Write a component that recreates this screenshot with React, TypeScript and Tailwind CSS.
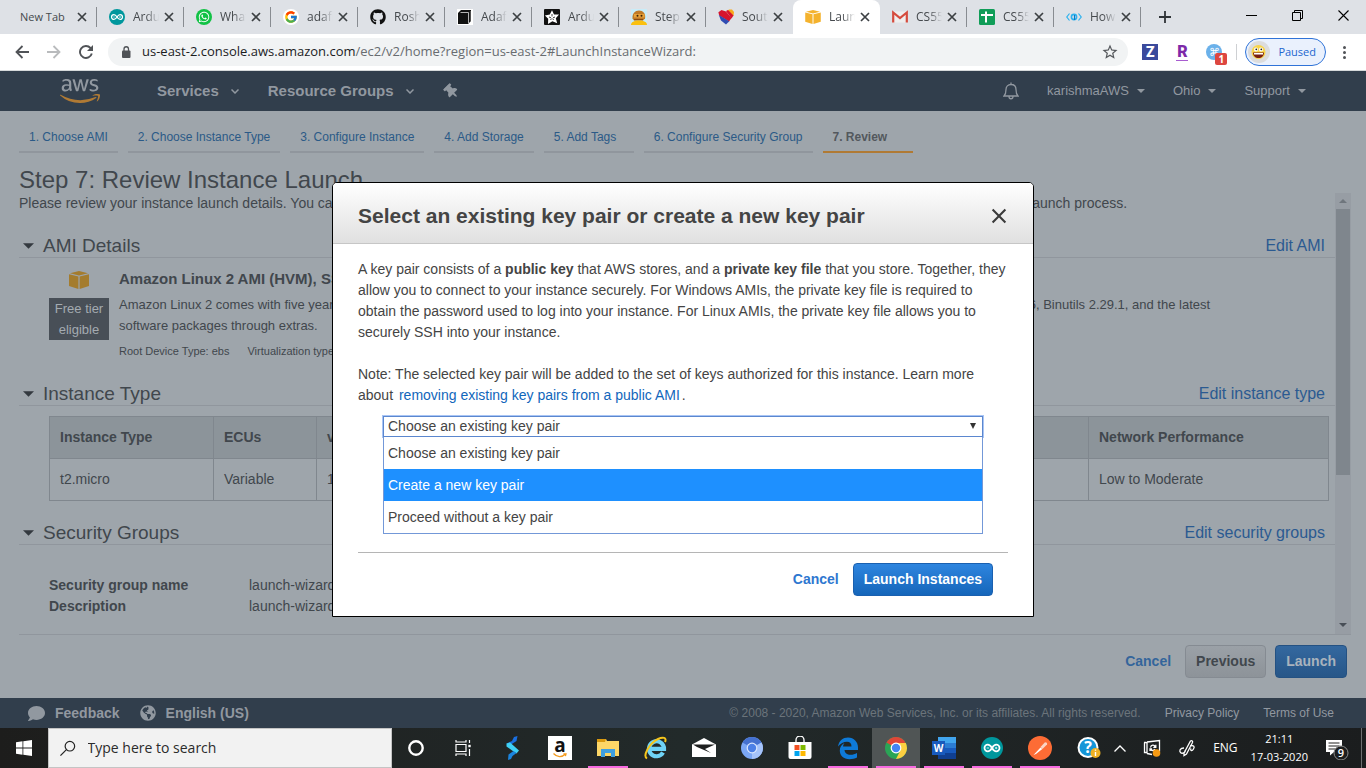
import React from "react";
import { FaAws, FaGithub, FaWhatsapp, FaGlobeAmericas, FaComment, FaThumbtack } from "react-icons/fa";
import { FcGoogle } from "react-icons/fc";

type IconProps = { className?: string };

/* ---------- shared drawings ---------- */

function Cross({ className, weight = 1.7 }: IconProps & { weight?: number }) {
  return (
    <svg viewBox="0 0 10 10" className={className} fill="none" stroke="currentColor" aria-hidden="true">
      <path d="M1 1 9 9M9 1 1 9" strokeWidth={weight} />
    </svg>
  );
}

function Arduino({ className }: IconProps) {
  return (
    <svg viewBox="0 0 24 24" className={className} aria-hidden="true">
      <circle cx="12" cy="12" r="12" fill="#00979d" />
      <g fill="none" stroke="#fff" strokeWidth="1.9">
        <path d="M12 12c-1.400-2.300-2.800-3.600-4.600-3.600a3.600 3.600 0 0 0 0 7.200c1.800 0 3.200-1.300 4.600-3.600zM12 12c1.400-2.300 2.800-3.600 4.600-3.600a3.600 3.600 0 0 1 0 7.200c-1.800 0-3.200-1.300-4.600-3.600z" />
        <path d="M6.200 12h2.600M15.200 12h2.600M16.500 10.700v2.600" strokeWidth="0.9" />
      </g>
    </svg>
  );
}

function Cube({ className }: IconProps) {
  return (
    <svg viewBox="0 0 20 18" className={className} fill="currentColor" aria-hidden="true">
      <path d="M10 0 19 2.2 10 4.4 1 2.2z" />
      <path d="M0 3.2 9.4 5.5V18L0 15z" />
      <path d="M20 3.2 10.6 5.5V18L20 15z" />
    </svg>
  );
}

function BookIcon() {
  return (
    <svg viewBox="0 0 16 16" className="size-4 bg-white" aria-hidden="true">
      <path d="M1 4 4 1h10v11l-3 3H1z" fill="#111" />
      <path d="M3.500 3.500h8V14" fill="none" stroke="#ddd" strokeWidth="0.8" />
      <path d="M13.400 2v10" stroke="#777" strokeWidth="0.7" />
    </svg>
  );
}

function AdafruitIcon() {
  return (
    <svg viewBox="0 0 16 16" className="size-4" aria-hidden="true">
      <rect width="16" height="16" rx="1" fill="#111" />
      <path d="M8 1.2 10 5.4 15 5.6 11.8 9.2 13.2 14.2 8.4 12.2 4 15 4.2 9.8 .9 6.4 5.8 5.6z" fill="#fff" />
      <path d="M8 5v2.4M5 8l2 .8M11 8l-2 .8M6.600 11l.8-1.400M9.600 11l-.9-1.400" stroke="#111" strokeWidth="0.8" />
    </svg>
  );
}

function RobotIcon() {
  return (
    <svg viewBox="0 0 16 16" className="size-4" aria-hidden="true">
      <rect width="16" height="16" fill="#c9ecf8" />
      <path d="M1.500 9.500C1 4.500 4 1.500 8 1.500S15 4.500 14 9.500l-2 2H3z" fill="#c07a26" />
      <path d="M3 5h10.500v3.500H3z" fill="#e8a33a" />
      <circle cx="6.500" cy="6.800" r="1" fill="#3b2208" />
      <circle cx="10.500" cy="6.800" r="1" fill="#3b2208" />
      <path d="M3 10h9v1.200H3z" fill="#8a4c12" />
      <path d="M0 16c0-3 3-4.500 8-4.500s8 1.500 8 4.500z" fill="#fbc010" />
    </svg>
  );
}

function HeartIcon() {
  return (
    <svg viewBox="0 0 16 16" className="size-4" aria-hidden="true">
      <path d="M8.500 2.500 11 .5h3l2 2.500-.5 4z" fill="#f9a91b" />
      <path d="M.400 3.200 3.500 1 8 2.500 13.500 9 11 12.500 1.200 6.500z" fill="#d5152e" />
      <path d="M8 2 10 1 15.500 6.500 13.500 9.500z" fill="#d5152e" />
      <path d="M.8 6 11.300 12.300 8 15.500 3 11.500z" fill="#304cb2" />
    </svg>
  );
}

function GmailIcon() {
  return (
    <svg viewBox="0 0 16 16" className="size-4" aria-hidden="true">
      <path d="M1 2.500h14v11H1z" fill="#eee" />
      <path d="M1.200 13.500V3.500L8 9l6.800-5.500v10" fill="none" stroke="#d54b3d" strokeWidth="2.200" />
    </svg>
  );
}

function SheetsIcon() {
  return (
    <svg viewBox="0 0 16 16" className="size-4" aria-hidden="true">
      <rect width="16" height="16" rx="1.500" fill="#109d58" />
      <path d="M7 2.500V13.500M2 6h12" stroke="#fff" strokeWidth="2" />
    </svg>
  );
}

function CodeIcon() {
  return (
    <svg viewBox="0 0 16 16" className="size-4" fill="none" stroke="#2cb1ee" aria-hidden="true">
      <path d="M3.500 4.500.8 8l2.700 3.500M12.500 4.500 15.200 8l-2.700 3.500" strokeWidth="1.200" />
      <circle cx="8" cy="8" r="2.600" strokeWidth="1.600" />
      <path d="M8.500 6v5" stroke="#0b79c4" strokeWidth="1.200" />
    </svg>
  );
}

/* ---------- browser ---------- */

type Tab = { title: string; icon?: React.ReactNode; active?: boolean };

const tabs: Tab[] = [
  { title: "New Tab" },
  { title: "Arduino", icon: <Arduino className="size-4" /> },
  {
    title: "WhatsApp",
    icon: (
      <span className="flex size-4 items-center justify-center rounded-full bg-[#12c246] text-white">
        <FaWhatsapp className="size-3" />
      </span>
    ),
  },
  {
    title: "adafruit",
    icon: (
      <span className="flex size-4 items-center justify-center rounded-full bg-white">
        <FcGoogle className="size-[14px]" />
      </span>
    ),
  },
  { title: "Roshan", icon: <FaGithub className="size-4 text-[#111]" /> },
  { title: "Adafruit", icon: <BookIcon /> },
  { title: "Arduino", icon: <AdafruitIcon /> },
  { title: "Step by", icon: <RobotIcon /> },
  { title: "Southwest", icon: <HeartIcon /> },
  { title: "Launch", icon: <Cube className="h-[14px] w-4 text-[#f4b22d]" />, active: true },
  { title: "CS5542", icon: <GmailIcon /> },
  { title: "CS5542", icon: <SheetsIcon /> },
  { title: "How to", icon: <CodeIcon /> },
];

function TabStrip() {
  return (
    <div className="flex h-[34px] items-stretch bg-[#dee1e6] pl-[10px] font-['Open_Sans',sans-serif] text-xs text-[#45494d]">
      {tabs.map((tab, i) => {
        const plain = tab.active || tabs[i + 1]?.active;
        return (
          <div
            key={i}
            className={"flex w-[87px] shrink-0 items-center justify-between " + (tab.active ? "rounded-t-lg bg-white" : "")}
          >
            <a href="#tab" className={"flex items-center gap-2 " + (tab.icon ? "pl-3" : "pl-[10px] text-[11px]")}>
              {tab.icon}
              <span
                className={
                  "overflow-hidden whitespace-nowrap " +
                  (tab.icon ? "w-[26px] [mask-image:linear-gradient(90deg,#000_50%,transparent)]" : "")
                }
              >
                {tab.title}
              </span>
            </a>
            <span className="flex items-center gap-[9px]">
              <button aria-label="Close tab">
                <Cross className="size-[10px] text-[#3c4043]" />
              </button>
              <span className={"h-5 w-px " + (plain ? "" : "bg-[#888c91]")} />
            </span>
          </div>
        );
      })}
      <button aria-label="New tab" className="flex w-[48px] items-center justify-center">
        <svg viewBox="0 0 12 12" className="size-3" stroke="#2f3337" strokeWidth="1.800">
          <path d="M6 0v12M0 6h12" />
        </svg>
      </button>
      <div className="ml-auto flex pb-1">
        <button aria-label="Minimize" className="flex w-[46px] items-center justify-center">
          <svg viewBox="0 0 11 11" className="size-[11px]" stroke="#000">
            <path d="M0 5.500h11" />
          </svg>
        </button>
        <button aria-label="Restore" className="flex w-[46px] items-center justify-center">
          <svg viewBox="0 0 11 11" className="size-[11px]" fill="none" stroke="#000">
            <path d="M.5 2.500h8v8h-8zM2.500 2.500v-2h8v8h-2" />
          </svg>
        </button>
        <button aria-label="Close window" className="flex w-[46px] items-center justify-center">
          <svg viewBox="0 0 11 11" className="size-[11px]" stroke="#000" strokeWidth="1.100">
            <path d="M.5.5l10 10M10.500.5l-10 10" />
          </svg>
        </button>
      </div>
    </div>
  );
}

function Toolbar() {
  return (
    <div className="flex h-[37px] items-center border-b border-[#d5d9da] bg-white pl-[6px] font-['Open_Sans',sans-serif]">
      <button aria-label="Back" className="flex w-8 justify-center">
        <svg viewBox="0 0 14 14" className="size-[14px]" fill="none" stroke="#505357" strokeWidth="1.800">
          <path d="M14 7H1.500M7.500 1 1.500 7l6 6" />
        </svg>
      </button>
      <button aria-label="Forward" className="flex w-8 justify-center">
        <svg viewBox="0 0 14 14" className="size-[14px]" fill="none" stroke="#b9bbbd" strokeWidth="1.800">
          <path d="M0 7h12.500M6.500 1l6 6-6 6" />
        </svg>
      </button>
      <button aria-label="Reload" className="flex w-8 justify-center">
        <svg viewBox="0 0 14 14" className="size-[14px]" fill="none" stroke="#505357" strokeWidth="1.900">
          <path d="M12.800 8.500A6 6 0 1 1 11.500 3l1 1.200" />
          <path d="M14 0v6H8z" fill="#505357" stroke="none" />
        </svg>
      </button>
      <div className="ml-[6px] flex h-7 flex-1 items-center rounded-full bg-[#f1f3f4] pr-[9px] pl-[13px]">
        <svg viewBox="0 0 10 12" className="h-3 w-[10px]" aria-hidden="true">
          <rect x="1" y="4.500" width="8.500" height="7.500" rx="1" fill="#505357" />
          <path d="M3 5V3a2.200 2.200 0 0 1 4.500 0v2" fill="none" stroke="#505357" strokeWidth="1.300" />
        </svg>
        <p className="ml-[11px] flex-1 text-[13px] whitespace-nowrap text-[#686c70]">
          <span className="text-[#1b1c1e]">us-east-2.console.aws.amazon.com</span>
          /ec2/v2/home?region=us-east-2#LaunchInstanceWizard:
        </p>
        <button aria-label="Bookmark">
          <svg viewBox="0 0 24 24" className="size-[18px]" fill="#55585c">
            <path d="M22 9.240l-7.190-.62L12 2 9.190 8.630 2 9.240l5.460 4.730L5.820 21 12 17.270 18.180 21l-1.630-7.030zM12 15.400l-3.760 2.270 1-4.280-3.320-2.880 4.380-.38L12 6.100l1.710 4.040 4.380.38-3.320 2.880 1 4.280z" />
          </svg>
        </button>
      </div>
      <button className="ml-[14px] flex size-4 items-center justify-center bg-[#3b4a9c] font-['Roboto',sans-serif] text-sm font-black text-white">
        Z
      </button>
      <button className="ml-[15px] flex h-5 w-[18px] flex-col items-center pt-[2px] font-['Roboto',sans-serif] text-base/4 font-black text-[#7d2aa8]">
        R
        <span className="h-px w-3 bg-[#a85cd0]" />
      </button>
      <button aria-label="Extension" className="relative ml-[15px] flex size-4 items-center justify-center rounded-full bg-[#6bb1ea] text-[11px] text-white">
        ⌘
        <span className="absolute top-[9px] left-[9px] flex size-3 items-center justify-center rounded-xs bg-[#dd4640] text-[10px] font-bold">
          1
        </span>
      </button>
      <span className="ml-[14px] h-4 w-px bg-[#ced0d3]" />
      <button className="ml-2 flex h-7 items-center gap-[8px] rounded-full border border-[#2f73d8] bg-[#eaf1fd] pr-[9px] pl-[2px] text-[11px] text-[#2366cf]">
        <svg viewBox="0 0 22 22" className="size-[22px]" aria-hidden="true">
          <circle cx="11" cy="11" r="11" fill="#dcdcdc" />
          <circle cx="10.500" cy="11" r="7" fill="#f8d44a" />
          <path d="M5 11.500h11c0 3.500-2.300 5.500-5.500 5.500S5 15 5 11.500z" fill="#7a1f12" />
          <path d="M6 12h9v1.500H6z" fill="#fff" />
          <circle cx="8" cy="8.500" r="2" fill="#fff" />
          <circle cx="13" cy="8.500" r="2" fill="#fff" />
          <circle cx="8.300" cy="8.300" r=".9" fill="#222" />
          <circle cx="13.300" cy="8.300" r=".9" fill="#222" />
        </svg>
        Paused
      </button>
      <button aria-label="Browser menu" className="mr-[13px] ml-[9px] flex w-[18px] flex-col items-center gap-[2px]">
        <span className="size-[3px] rounded-full bg-[#505357]" />
        <span className="size-[3px] rounded-full bg-[#505357]" />
        <span className="size-[3px] rounded-full bg-[#505357]" />
      </button>
    </div>
  );
}

/* ---------- console ---------- */

function Chevron() {
  return (
    <svg viewBox="0 0 8 5" className="h-[5px] w-2" fill="none" stroke="currentColor" strokeWidth="1.500" aria-hidden="true">
      <path d="M.5.5 4 4 7.500.5" />
    </svg>
  );
}

function Caret({ className }: IconProps) {
  return (
    <svg viewBox="0 0 8 4" className={className} fill="currentColor" aria-hidden="true">
      <path d="M0 0h8L4 4z" />
    </svg>
  );
}

function ConsoleNav() {
  return (
    <nav className="flex h-10 shrink-0 items-center bg-[#313e4c] pl-[60px] text-[#9198a0]">
      <a href="#home" aria-label="AWS home">
        <svg width="0" height="0" className="absolute" aria-hidden="true">
          <linearGradient id="aws-fill" x1="0" y1="0" x2="0" y2="1">
            <stop offset="0.6" stopColor="#9198a0" />
            <stop offset="0.6" stopColor="#b07a34" />
          </linearGradient>
        </svg>
        <FaAws className="h-8 w-10" fill="url(#aws-fill)" />
      </a>
      <button className="ml-[57px] flex items-center gap-3 text-[15px] font-bold">
        Services <Chevron />
      </button>
      <button className="ml-[29px] flex items-center gap-3 text-[15px] font-bold">
        Resource Groups <Chevron />
      </button>
      <button aria-label="Pin shortcuts" className="ml-[30px]">
        <FaThumbtack className="size-[15px] -rotate-45" />
      </button>
      <div className="ml-auto flex items-center pr-[60px] text-[13px]">
        <button aria-label="Notifications">
          <svg viewBox="0 0 16 18" className="h-[18px] w-4" fill="none" stroke="currentColor" strokeWidth="1.300">
            <path d="M1 14c2-2 2-3.500 2-6.500C3 4.500 5 2.500 8 2.500s5 2 5 5c0 3 0 4.500 2 6.500zM8 .5v2M6 14.500c0 3 4 3 4 0" />
          </svg>
        </button>
        <button className="ml-7 flex items-center gap-2">
          karishmaAWS <Caret className="h-1 w-2" />
        </button>
        <button className="ml-7 flex items-center gap-2">
          Ohio <Caret className="h-1 w-2" />
        </button>
        <button className="ml-7 flex items-center gap-2">
          Support <Caret className="h-1 w-2" />
        </button>
      </div>
    </nav>
  );
}

const steps = [
  "1. Choose AMI",
  "2. Choose Instance Type",
  "3. Configure Instance",
  "4. Add Storage",
  "5. Add Tags",
  "6. Configure Security Group",
  "7. Review",
];

function StepBar() {
  return (
    <ol className="flex gap-[10px] pt-[15px] text-xs">
      {steps.map((step, i) => {
        const current = i === steps.length - 1;
        return (
          <li
            key={step}
            className={
              "h-[27px] min-w-[90px] border-b-2 px-[10px] pt-px leading-5 " +
              (current ? "border-[#b07a34] font-bold text-[#53585d]" : "border-[#90969d]")
            }
          >
            {current ? step : <a href={"#step-" + (i + 1)} className="text-[#2b5a87]">{step}</a>}
          </li>
        );
      })}
    </ol>
  );
}

function SectionHead({ title, action }: { title: string; action: string }) {
  return (
    <div className="flex items-end justify-between border-b border-[#90969d] pr-[10px] pl-1">
      <h2 className="flex items-center gap-[9px] text-[19px]/[22px]">
        <Caret className="h-[6px] w-[11px] text-[#33393f]" />
        {title}
      </h2>
      <a href="#edit" className="text-base/[22px] text-[#2b5a91]">
        {action}
      </a>
    </div>
  );
}

const columns = [
  { name: "Instance Type", value: "t2.micro", width: "w-[164px]" },
  { name: "ECUs", value: "Variable", width: "w-[103px]" },
  { name: "vCPUs", value: "1", width: "w-[110px]" },
  { name: "Memory (GiB)", value: "1", width: "w-[180px]" },
  { name: "Instance Storage (GB)", value: "EBS only", width: "w-[222px]" },
  { name: "EBS-Optimized Available", value: "-", width: "w-[260px]" },
  { name: "Network Performance", value: "Low to Moderate", width: "" },
];

function Review() {
  return (
    <div className="flex flex-1 border-b border-[#90969d]">
      <div className="flex-1">
        <p className="text-sm/5">
          Please review your instance launch details. You can go back to edit changes for each section. Click{" "}
          <b>Launch</b> to assign a key pair to your instance and complete the launch process.
        </p>
        <section className="mt-[22px]">
          <SectionHead title="AMI Details" action="Edit AMI" />
          <div className="flex gap-[10px] pt-[10px] pl-[30px]">
            <div className="flex w-[60px] shrink-0 flex-col items-center">
              <Cube className="mt-[3px] h-[18px] w-5 text-[#a47c2e]" />
              <span className="mt-[9px] w-full bg-[#484f57] px-1 text-center text-[13px]/[21px] text-[#a4abb1]">
                Free tier eligible
              </span>
            </div>
            <div className="w-[1110px]">
              <h3 className="text-[15px]/[22px] font-bold">Amazon Linux 2 AMI (HVM), SSD Volume Type - ami-0e01ce4ee18447327</h3>
              <p className="mt-1 text-[13px]/[21px]">
                Amazon Linux 2 comes with five years support. It provides Linux kernel 4.14 tuned for optimal performance
                on Amazon EC2, systemd 219, GCC 7.3, Glibc 2.26, Binutils 2.29.1, and the latest software packages
                through extras.
              </p>
              <p className="mt-[7px] flex gap-[18px] text-[11px]/4">
                <span>Root Device Type: ebs</span>
                <span>Virtualization type: hvm</span>
              </p>
            </div>
          </div>
        </section>
        <section className="mt-6">
          <SectionHead title="Instance Type" action="Edit instance type" />
          <div className="pt-[10px] pr-[6px] pl-[30px]">
            <table className="w-full table-fixed border-collapse text-left text-sm [&_td]:border [&_td]:border-[#80878e] [&_td]:px-[10px] [&_td]:pb-[2px] [&_th]:border [&_th]:border-[#80878e] [&_th]:px-[10px] [&_th]:pb-[2px]">
              <thead>
                <tr className="h-[42px] bg-[#8c949a]">
                  {columns.map((c) => (
                    <th key={c.name} className={"whitespace-nowrap " + c.width}>
                      {c.name}
                    </th>
                  ))}
                </tr>
              </thead>
              <tbody>
                <tr className="h-[42px]">
                  {columns.map((c) => (
                    <td key={c.name}>{c.value}</td>
                  ))}
                </tr>
              </tbody>
            </table>
          </div>
        </section>
        <section className="mt-[21px]">
          <SectionHead title="Security Groups" action="Edit security groups" />
          <dl className="grid grid-cols-[200px_1fr] pt-[30px] pl-[30px] text-sm/[21px]">
            <dt className="font-bold">Security group name</dt>
            <dd>launch-wizard-1</dd>
            <dt className="font-bold">Description</dt>
            <dd>launch-wizard-1 created 2020-03-17</dd>
          </dl>
        </section>
      </div>
      <div className="flex w-4 flex-col items-center bg-[#979da4] text-[#484f57]">
        <Caret className="mt-[6px] h-1 w-2 rotate-180 text-[#6f767d]" />
        <div className="mt-[6px] h-[266px] w-[14px] bg-[#7f868d]" />
        <Caret className="mt-auto mb-[7px] h-1 w-2" />
      </div>
    </div>
  );
}

function KeyPairDialog() {
  return (
    <div
      role="dialog"
      aria-modal="true"
      aria-labelledby="dialog-title"
      className="w-[702px] rounded-t-[5px] border border-black bg-white text-sm text-[#444]"
    >
      <header className="flex h-[61px] items-center justify-between rounded-t-[4px] border-b border-[#c6c6c6] bg-linear-to-b from-white to-[#e0e0e0] pt-[6px] pr-[26px] pl-[25px]">
        <h2 id="dialog-title" className="text-[21px] font-bold">
          Select an existing key pair or create a new key pair
        </h2>
        <button aria-label="Close">
          <Cross className="size-4 text-[#3a3a3a]" weight={1.3} />
        </button>
      </header>
      <div className="px-[25px] pt-[15px] pb-5">
        <p className="leading-[21px]">
          A key pair consists of a <b>public key</b> that AWS stores, and a <b>private key file</b> that you store.
          Together, they allow you to connect to your instance securely. For Windows AMIs, the private key file is
          required to obtain the password used to log into your instance. For Linux AMIs, the private key file allows
          you to securely SSH into your instance.
        </p>
        <p className="mt-[21px] leading-[21px]">
          Note: The selected key pair will be added to the set of keys authorized for this instance. Learn more about{" "}
          <a href="#learn" className="mx-[2px] text-[#1166bb]">
            removing existing key pairs from a public AMI
          </a>
          .
        </p>
        <div className="relative mt-[10px] mr-[25px] mb-[115px] ml-[25px]">
          <select
            aria-label="Key pair option"
            defaultValue="existing"
            className="block h-[21px] w-full appearance-none border border-[#5b87cf] bg-white pl-1 text-sm/[19px] text-[#444] shadow-[0_0_0_1px_#a9c5f5]"
          >
            <option value="existing">Choose an existing key pair</option>
            <option value="create">Create a new key pair</option>
            <option value="none">Proceed without a key pair</option>
          </select>
          <svg viewBox="0 0 6 6" className="absolute top-[7px] right-[7px] size-[6px]" aria-hidden="true">
            <path d="M0 0h6L3 6z" fill="#333" />
          </svg>
          <ul role="listbox" aria-label="Key pair choices" className="absolute inset-x-0 top-full border border-t-0 border-[#7398d8] bg-white leading-8">
            <li role="option" aria-selected="false" className="pl-1">Choose an existing key pair</li>
            <li role="option" aria-selected="true" className="bg-[#1e90ff] pl-1 text-white">Create a new key pair</li>
            <li role="option" aria-selected="false" className="pl-1">Proceed without a key pair</li>
          </ul>
        </div>
        <div className="flex items-center justify-end gap-[14px] border-t border-[#b5b5b5] pt-[10px] pr-[15px] font-bold">
          <button className="pb-[2px] text-[#2e77d0]">Cancel</button>
          <button className="h-[33px] rounded-[4px] border border-[#1a60b0] bg-linear-to-b from-[#2e85df] to-[#1566ba] px-[10px] pb-[2px] text-white">
            Launch Instances
          </button>
        </div>
      </div>
    </div>
  );
}

/* ---------- taskbar ---------- */

const S = "size-6";

const apps: { name: string; icon: React.ReactNode; bar?: boolean; focus?: boolean }[] = [
  { name: "Cortana", icon: <svg viewBox="0 0 24 24" className={S}><circle cx="12" cy="12" r="6.700" fill="none" stroke="#fff" strokeWidth="2.400" /></svg> },
  {
    name: "Task view",
    icon: (
      <svg viewBox="0 0 24 24" className={S} fill="none" stroke="#fff" strokeWidth="1.200">
        <path d="M4 8.500h10v7H4zM4 4v2h10V4M4 20v-2h10v2M17.500 4v3M17.500 13v7" />
        <path d="M16.300 8.800h2.400v2.400h-2.400z" fill="#fff" stroke="none" />
      </svg>
    ),
  },
  {
    name: "Snap",
    icon: (
      <svg viewBox="0 0 24 24" className={S}>
        <path d="M17.500 0 16.500 5 9.500 9.500 6.500 7.500 12 5 14 1z" fill="#1a6fe0" />
        <path d="M6.500 7.500 10 6.500l9 8-2.500 3-3-2-7-5z" fill="#3fd0f5" />
        <path d="M8 24 8.500 18.500l5-3.500 3 2-4 3-1.500 3z" fill="#1b84dd" />
      </svg>
    ),
  },
  {
    name: "Amazon",
    icon: (
      <span className="flex size-6 flex-col items-center bg-white font-['Open_Sans',sans-serif] text-[19px]/[19px] font-bold text-[#111]">
        <span className="h-[17px]">a</span>
        <svg viewBox="0 0 14 5" className="h-[5px] w-[14px]" fill="none" stroke="#f39a1d" strokeWidth="1.300"><path d="M.5.500C4 4.500 9 4.500 12.500 1M10.500.8h2.500l-.6 2.400" /></svg>
      </span>
    ),
  },
  {
    name: "File Explorer",
    bar: true,
    icon: (
      <svg viewBox="0 0 24 24" className={S}>
        <path d="M1 3h9l1 2h12v15H1z" fill="#fcd667" />
        <path d="M1 3h9l-1 3H1z" fill="#d9990f" />
        <path d="M5 21v-8h14v8h-4v-4H9v4z" fill="#3f9fe0" />
      </svg>
    ),
  },
  {
    name: "Internet Explorer",
    icon: (
      <svg viewBox="0 0 24 24" className={S} fill="none">
        <path d="M19 16.500A7.500 7.500 0 1 1 20 12.800H7" stroke="#6fd3f7" strokeWidth="4.200" />
        <path d="M3 22.500C-1.500 20 5 7.500 14 3c5-2.500 9-1.500 7 3" stroke="#f5c51c" strokeWidth="2" />
      </svg>
    ),
  },
  {
    name: "Mail",
    icon: (
      <svg viewBox="0 0 24 24" className={S}>
        <path d="M0 8.500 12 2l12 6.500V21H0z" fill="#fff" />
        <path d="M1 8.500h22L13 13l6 4-14-6z" fill="#1d1f1f" />
      </svg>
    ),
  },
  {
    name: "Chromium",
    icon: (
      <svg viewBox="0 0 24 24" className={S}>
        <circle cx="12" cy="12" r="11" fill="#7ba7f5" />
        <path d="M12 12 2.500 6.500A11 11 0 0 1 21.500 6.500z" fill="#4571d0" />
        <path d="M12 12 21.500 6.500A11 11 0 0 1 12 23z" fill="#a6c4fa" />
        <circle cx="12" cy="12" r="5.400" fill="#dbe7fd" />
        <circle cx="12" cy="12" r="4.200" fill="#4c80e6" />
      </svg>
    ),
  },
  {
    name: "Store",
    icon: (
      <svg viewBox="0 0 24 24" className={S}>
        <path d="M.5 6h23v15q0 2-2 2h-19q-2 0-2-2z" fill="#fff" />
        <path d="M8 6V4a4 4 0 0 1 8 0v2" fill="none" stroke="#fff" strokeWidth="1.300" />
        <path d="M6.500 9h5v5h-5z" fill="#f25022" />
        <path d="M12.500 9h5v5h-5z" fill="#7fba00" />
        <path d="M6.500 15h5v5h-5z" fill="#00a4ef" />
        <path d="M12.500 15h5v5h-5z" fill="#ffb900" />
      </svg>
    ),
  },
  {
    name: "Edge",
    bar: true,
    icon: (
      <svg viewBox="0 0 24 24" className={S}>
        <path d="M2 10.500C3 4.500 7 1.500 12 1.500c6 0 10 4.500 10 10V14H8.500c.2 3 2.500 4.800 6 4.800 2.500 0 4.500-.6 6.500-1.800v4.500c-2 1.200-4.600 1.700-7.500 1.700-6 0-9.700-3.500-9.700-8.700 0-3.500 2-6 4.700-7.500-1 1.200-1.300 2.300-1.400 3.500h8.400c0-3-1.500-4.700-4.500-4.700C7.500 5.800 4.500 7.500 2 10.500z" fill="#0e7ad8" />
      </svg>
    ),
  },
  {
    name: "Chrome",
    bar: true,
    focus: true,
    icon: (
      <svg viewBox="0 0 24 24" className={S}>
        <circle cx="12" cy="12" r="11" fill="#2aa456" />
        <path d="M12 12 2.500 6.500A11 11 0 0 1 21.500 6.500z" fill="#df4637" />
        <path d="M12 7h9.800A11 11 0 0 1 12 23l4.300-8.500z" fill="#fdcf41" />
        <circle cx="12" cy="12" r="5.400" fill="#fff" />
        <circle cx="12" cy="12" r="4.200" fill="#4285f4" />
      </svg>
    ),
  },
  {
    name: "Word",
    bar: true,
    icon: (
      <svg viewBox="0 0 24 24" className={S}>
        <path d="M6 1h18v6H6z" fill="#41a5ee" />
        <path d="M6 7h18v5H6z" fill="#2b7cd3" />
        <path d="M6 12h18v5H6z" fill="#185abd" />
        <path d="M6 17h18v6H6z" fill="#103f91" />
        <path d="M0 5h13v14H0z" fill="#185abd" />
        <text x="6.500" y="15.500" textAnchor="middle" fontFamily="Open Sans" fontWeight="700" fontSize="10" fill="#fff">W</text>
      </svg>
    ),
  },
  { name: "Arduino IDE", bar: true, icon: <Arduino className="size-[22px]" /> },
  {
    name: "Postman",
    bar: true,
    icon: (
      <svg viewBox="0 0 24 24" className={S}>
        <circle cx="12" cy="12" r="12" fill="#fd6c35" />
        <path d="M5.500 19 12.500 11.500l1.800 1.500L8 18z" fill="#fff" />
        <path d="M12.500 11 17 6.200q2.500 0 2 2.300L14.500 13z" fill="#fbd3c3" />
      </svg>
    ),
  },
];

function Taskbar() {
  return (
    <div className="flex h-10 shrink-0 items-stretch bg-linear-to-r from-[#1d1d1c] via-[#222a2a] to-[#1b1d1e] font-['Open_Sans',sans-serif] text-white">
      <button aria-label="Start" className="flex w-12 items-center justify-center">
        <svg viewBox="0 0 16 16" className="size-4" fill="#fff">
          <path d="M0 2.200 6.500 1.300V7.600H0zM7.300 1.200 16 0v7.600H7.300zM0 8.400h6.500v6.300L0 13.800zM7.300 8.400H16V16l-8.700-1.200z" />
        </svg>
      </button>
      <label className="flex w-[344px] items-center gap-3 border border-[#c4c4c4] bg-[#f2f2f2] pl-[11px]">
        <svg viewBox="0 0 17 17" className="size-[17px]" fill="none" stroke="#222" strokeWidth="1.300" aria-hidden="true">
          <circle cx="10.800" cy="6" r="5.200" />
          <path d="M7 9.700.5 16.300" />
        </svg>
        <input
          type="text"
          aria-label="Search"
          placeholder="Type here to search"
          className="w-full bg-transparent text-sm outline-none placeholder:text-[#2b2b2b]"
        />
      </label>
      {apps.map((app) => (
        <button
          key={app.name}
          aria-label={app.name}
          className={"relative flex w-[48px] items-center justify-center " + (app.focus ? "bg-[#505555]" : "")}
        >
          {app.icon}
          {app.bar && <span className="absolute inset-x-1 bottom-0 h-[2px] bg-[#f66ae0]" />}
        </button>
      ))}
      <div className="ml-auto flex items-center">
        <button aria-label="Help">
          <svg viewBox="0 0 24 24" className={S}>
            <circle cx="11" cy="11.500" r="9.500" fill="#1496d8" stroke="#fff" strokeWidth="2" />
            <text x="11" y="17" textAnchor="middle" fontFamily="Open Sans" fontWeight="700" fontSize="16" fill="#fff">?</text>
            <circle cx="18.500" cy="17" r="5" fill="#eeb023" />
            <path d="M18.500 16v4M18.500 13.500v1.300" stroke="#fff" strokeWidth="1.400" />
          </svg>
        </button>
        <button aria-label="Show hidden icons" className="ml-[13px]">
          <svg viewBox="0 0 12 7" className="h-[7px] w-3" fill="none" stroke="#fff" strokeWidth="1.300"><path d="M.5 6.500 6 1l5.500 5.500" /></svg>
        </button>
        <button aria-label="Network" className="ml-[17px]">
          <svg viewBox="0 0 18 18" className="size-[18px]" fill="none" stroke="#fff" strokeWidth="1.300">
            <path d="M9 15.500 4 14.500M1 3.500h2.500M1.500 3.500v10H4M4 3 16.500 1.500v11M4 3v11.500M7.500 8.500c.5-3 4-3 4.500-.5M12.800 5.800V8.300h-2.500M12 10c-1 2-4 2-4.500 0M7 12V9.800h2" />
            <circle cx="13.500" cy="14" r="3.800" fill="#f59a13" stroke="none" />
          </svg>
        </button>
        <button aria-label="Pen" className="ml-[17px]">
          <svg viewBox="0 0 18 18" className="size-[18px]" fill="none" stroke="#fff" strokeWidth="1.300">
            <path d="M6 9c-4 0-5 3-3.500 4.500S8 14 7 11M6 14 12.500 2c1.500-1 2.500.3 2 1.500L8.500 15 6 16.500zM12 7c4-1 5 .5 3.500 3S12 12 13 9.500" />
          </svg>
        </button>
        <span className="ml-[17px] text-xs">ENG</span>
        <time className="ml-[13px] text-center text-[11px]/[18px]">
          21:11
          <br />
          17-03-2020
        </time>
        <button aria-label="Notifications" className="ml-[17px] mr-3">
          <svg viewBox="0 0 24 24" className={S}>
            <path d="M1 4h16v12H9l-4 3.500V16H1z" fill="#fff" />
            <path d="M3.500 7h11M3.500 10h11M3.500 13h7" stroke="#222" strokeWidth="1.100" />
            <circle cx="16" cy="17" r="7" fill="#1c1e1f" stroke="#8b8b8b" />
            <text x="16" y="21" textAnchor="middle" fontFamily="Open Sans" fontWeight="600" fontSize="11" fill="#fff">9</text>
          </svg>
        </button>
        <span className="mr-1 h-10 w-px bg-[#6d6f70]" />
      </div>
    </div>
  );
}

export default function App() {
  return (
    <div className="flex min-h-screen flex-col font-['Liberation_Sans',Arial,sans-serif]">
      <TabStrip />
      <Toolbar />
      <div className="relative flex flex-1 flex-col">
        <ConsoleNav />
        <main className="flex flex-1 flex-col bg-[#9ea5ab] pr-[15px] pl-[19px] text-[#41474d]">
          <StepBar />
          <h1 className="mt-[14px] text-2xl/[26px]">Step 7: Review Instance Launch</h1>
          <Review />
          <div className="flex h-[63px] items-start justify-end gap-[9px] pt-[10px] pr-1 text-sm font-bold">
            <button className="mr-[5px] h-[33px] pb-[2px] text-[#34659b]">Cancel</button>
            <button className="h-[33px] rounded-[4px] border border-[#858b92] bg-linear-to-b from-[#9ba1a7] to-[#8d9399] px-[10px] pb-[2px]">
              Previous
            </button>
            <button className="h-[33px] rounded-[4px] border border-[#245182] bg-linear-to-b from-[#34689f] to-[#275688] px-[10px] pb-[2px] text-[#a9b3bd]">
              Launch
            </button>
          </div>
        </main>
        <footer className="flex h-[30px] shrink-0 items-center bg-[#313e4c] pr-8 pl-7 text-[#9198a0]">
          <a href="#feedback" className="flex items-center gap-[10px] text-sm font-bold">
            <FaComment className="size-[17px]" /> Feedback
          </a>
          <button className="ml-5 flex items-center gap-[10px] text-sm font-bold">
            <FaGlobeAmericas className="size-4" /> English (US)
          </button>
          <p className="ml-auto text-xs text-[#6b747b]">
            © 2008 - 2020, Amazon Web Services, Inc. or its affiliates. All rights reserved.
          </p>
          <a href="#privacy" className="ml-6 text-xs">Privacy Policy</a>
          <a href="#terms" className="ml-6 text-xs">Terms of Use</a>
        </footer>
        <div className="absolute inset-0 flex items-center justify-center">
          <KeyPairDialog />
        </div>
      </div>
      <Taskbar />
    </div>
  );
}
